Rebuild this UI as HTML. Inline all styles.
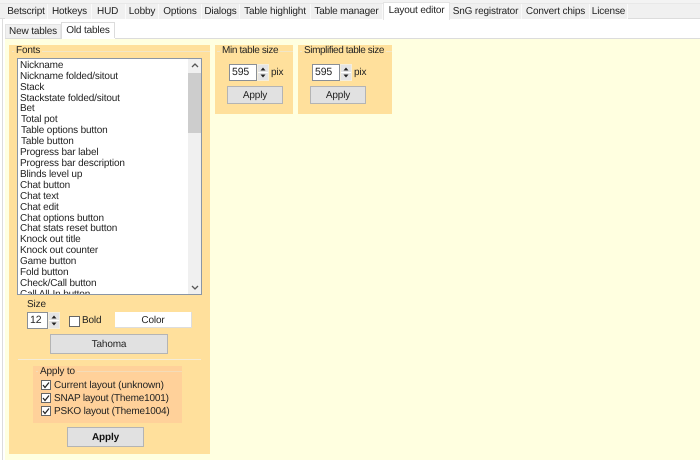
<!DOCTYPE html>
<html><head><meta charset="utf-8">
<style>
html,body{margin:0;padding:0;width:700px;height:460px;overflow:hidden;background:#f3f3f3}
body{position:relative;font-family:"Liberation Sans",sans-serif;font-size:10px;letter-spacing:-.15px;color:#222;text-rendering:geometricPrecision}
#w{left:0;top:0;width:700px;height:460px;filter:blur(.35px)}
div,span{position:absolute;box-sizing:border-box}
.t{white-space:nowrap;line-height:12px;height:12px}
.tab{background:#f0f0f0;border-right:1px solid #fafafa;text-align:center;line-height:15px;top:4px;height:15px;white-space:nowrap}
.btn{background:#e1e1e1;border:1px solid #b4b4b4;text-align:center;color:#222}
.spin{background:#fff;border:1px solid #8a8f96;line-height:15px;padding-left:2px;font-size:10.5px}
.line{background:#f1e6c8}
.sp{background:#e4e4e4;border:1px solid #f4eedd;width:12px;height:17px}
.sm{background:#fff;width:10px;height:1px}
</style></head><body><div id="w">
<div style="left:0;top:19px;width:700px;height:441px;background:#fff"></div>
<div style="left:0;top:3px;width:700px;height:16px;background:#f0f0f0;border-top:1px solid #e8e8e8;border-bottom:1px solid #dcdcdc"></div>
<div class="tab" style="left:5px;width:43px">Betscript</div>
<div class="tab" style="left:48px;width:44px">Hotkeys</div>
<div class="tab" style="left:92px;width:34px;text-align:left;padding-left:5px">HUD</div>
<div class="tab" style="left:126px;width:33px">Lobby</div>
<div class="tab" style="left:159px;width:43px">Options</div>
<div class="tab" style="left:202px;width:38px">Dialogs</div>
<div class="tab" style="left:240px;width:71px">Table highlight</div>
<div class="tab" style="left:311px;width:72px">Table manager</div>
<div class="tab" style="left:383px;width:67px;top:2px;height:18px;background:#fff;border:1px solid #e4e4e4;border-bottom:0;line-height:16px">Layout editor</div>
<div class="tab" style="left:450px;width:72px">SnG registrator</div>
<div class="tab" style="left:522px;width:68px">Convert chips</div>
<div class="tab" style="left:590px;width:38px">License</div>

<div style="left:2px;top:19px;width:1px;height:441px;background:#dcdcdc"></div>
<div class="tab" style="left:5px;width:56px;top:24px;height:15px;background:#f0f0f0;border:1px solid #e4e4e4;border-bottom:0;line-height:14px">New tables</div>
<div class="tab" style="left:61px;width:54px;top:22px;height:18px;background:#fff;border:1px solid #dcdcdc;border-bottom:0;line-height:15px">Old tables</div>
<div style="left:5px;top:38px;width:695px;height:1px;background:#dcdcdc"></div>
<div style="left:61.5px;top:38px;width:53px;height:1px;background:#fff"></div>
<div style="left:5px;top:39px;width:695px;height:421px;background:#ffffe0"></div>

<!-- Fonts panel -->
<div style="left:9px;top:45px;width:201px;height:409px;background:#ffe09c"></div>
<div class="line" style="left:12px;top:51px;width:198px;height:1px"></div>
<div class="t" style="left:14px;top:45px;background:#ffe09c;padding:0 2px">Fonts</div>

<div style="left:17px;top:58px;width:185px;height:237px;background:#fff;border:1px solid #8a96a6;overflow:hidden">
<div class="t" style="left:2px;top:1px">Nickname</div>
<div class="t" style="left:2px;top:12px">Nickname folded/sitout</div>
<div class="t" style="left:2px;top:23px">Stack</div>
<div class="t" style="left:2px;top:34px">Stackstate folded/sitout</div>
<div class="t" style="left:2px;top:44px">Bet</div>
<div class="t" style="left:3px;top:55px">Total pot</div>
<div class="t" style="left:3px;top:66px">Table options button</div>
<div class="t" style="left:3px;top:77px">Table button</div>
<div class="t" style="left:2px;top:88px">Progress bar label</div>
<div class="t" style="left:2px;top:99px">Progress bar description</div>
<div class="t" style="left:2px;top:110px">Blinds level up</div>
<div class="t" style="left:2px;top:121px">Chat button</div>
<div class="t" style="left:2px;top:132px">Chat text</div>
<div class="t" style="left:2px;top:143px">Chat edit</div>
<div class="t" style="left:2px;top:154px">Chat options button</div>
<div class="t" style="left:2px;top:164px">Chat stats reset button</div>
<div class="t" style="left:2px;top:175px">Knock out title</div>
<div class="t" style="left:2px;top:186px">Knock out counter</div>
<div class="t" style="left:2px;top:197px">Game button</div>
<div class="t" style="left:2px;top:208px">Fold button</div>
<div class="t" style="left:2px;top:219px">Check/Call button</div>
<div class="t" style="left:2px;top:230px">Call All-In button</div>
<div style="left:170px;top:0;width:14px;height:235px;background:#f0f0f0"></div>
<div style="left:170px;top:14px;width:14px;height:60px;background:#cdcdcd"></div>
<svg style="position:absolute;left:172px;top:3px" width="10" height="8"><path d="M2 5L5 2L8 5" fill="none" stroke="#555" stroke-width="1.3"/></svg>
<svg style="position:absolute;left:172px;top:224px" width="10" height="8"><path d="M2 3L5 6L8 3" fill="none" stroke="#555" stroke-width="1.3"/></svg>
</div>

<div class="t" style="left:27px;top:299px">Size</div>
<div class="spin" style="left:27px;top:312px;width:21px;height:17px">12</div>
<div class="sp" style="left:48px;top:312px"></div>
<div class="sm" style="left:49px;top:320px"></div>
<svg style="position:absolute;left:50px;top:313px" width="8" height="15"><path d="M1.5 5.5L4 2.5L6.500 5.500Z M1.500 9.500L6.500 9.500L4 12.500Z" fill="#222"/></svg>
<div style="left:69px;top:316px;width:11px;height:11px;background:#fff;border:1px solid #666"></div>
<div class="t" style="left:82px;top:315px">Bold</div>
<div style="left:115px;top:312px;width:77px;height:16px;background:#fff;text-align:center;line-height:17px;border-right:1px solid #ddd;border-bottom:1px solid #ddd">Color</div>
<div class="btn" style="left:50px;top:334px;width:118px;height:20px;line-height:19px">Tahoma</div>
<div style="left:18px;top:359px;width:183px;height:1px;background:#f4ecd8"></div>

<div style="left:33px;top:366px;width:149px;height:57px;background:#ffd19a"></div>
<div class="line" style="left:36px;top:371px;width:146px;height:1px;background:#f4dcb8"></div>
<div class="t" style="left:38px;top:366px;background:#ffd19a;padding:0 2px">Apply to</div>
<div style="left:41px;top:380px;width:10px;height:10px;background:#fff;border:1px solid #666"></div>
<div style="left:41px;top:393px;width:10px;height:10px;background:#fff;border:1px solid #666"></div>
<div style="left:41px;top:406px;width:10px;height:10px;background:#fff;border:1px solid #666"></div>
<svg style="position:absolute;left:41px;top:380px" width="10" height="36"><path d="M2 5L4 7.5L8 2.500M2 18L4 20.500L8 15.500M2 31L4 33.500L8 28.500" fill="none" stroke="#222" stroke-width="1.2"/></svg>
<div class="t" style="left:54px;top:380px;letter-spacing:-.1px">Current layout (unknown)</div>
<div class="t" style="left:54px;top:393px;letter-spacing:-.2px">SNAP layout (Theme1001)</div>
<div class="t" style="left:54px;top:406px;letter-spacing:-.2px">PSKO layout (Theme1004)</div>
<div class="btn" style="left:67px;top:427px;width:77px;height:20px;line-height:20px;font-weight:bold;color:#111">Apply</div>

<!-- Min table size -->
<div style="left:215px;top:45px;width:78px;height:69px;background:#ffe09c"></div>
<div class="line" style="left:217px;top:51px;width:76px;height:1px"></div>
<div class="t" style="left:220px;top:45px;background:#ffe09c;padding:0 2px;letter-spacing:-.35px">Min table size</div>
<div class="spin" style="left:229px;top:64px;width:28px;height:17px">595</div>
<div class="sp" style="left:257px;top:64px"></div>
<div class="sm" style="left:258px;top:72px"></div>
<svg style="position:absolute;left:259px;top:65px" width="8" height="15"><path d="M1.5 5.5L4 2.5L6.500 5.500Z M1.500 9.500L6.500 9.500L4 12.500Z" fill="#222"/></svg>
<div class="t" style="left:271px;top:67px">pix</div>
<div class="btn" style="left:227px;top:86px;width:56px;height:18px;line-height:17px">Apply</div>

<!-- Simplified table size -->
<div style="left:298px;top:45px;width:94px;height:69px;background:#ffe09c"></div>
<div class="line" style="left:300px;top:51px;width:92px;height:1px"></div>
<div class="t" style="left:302px;top:45px;background:#ffe09c;padding:0 2px;letter-spacing:-.4px">Simplified table size</div>
<div class="spin" style="left:312px;top:64px;width:28px;height:17px">595</div>
<div class="sp" style="left:340px;top:64px"></div>
<div class="sm" style="left:341px;top:72px"></div>
<svg style="position:absolute;left:342px;top:65px" width="8" height="15"><path d="M1.5 5.5L4 2.5L6.500 5.500Z M1.500 9.500L6.500 9.500L4 12.500Z" fill="#222"/></svg>
<div class="t" style="left:354px;top:67px">pix</div>
<div class="btn" style="left:310px;top:86px;width:56px;height:18px;line-height:17px">Apply</div>
</div></body></html>
